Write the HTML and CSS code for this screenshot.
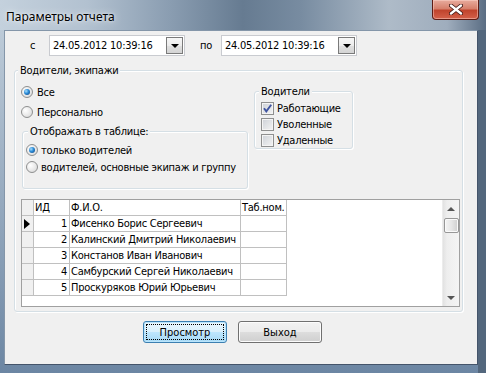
FILE: index.html
```html
<!DOCTYPE html>
<html lang="ru">
  <head>
    <meta charset="UTF-8" />
    <title>Параметры отчета</title>
    <link rel="stylesheet" href="styles.css">
  </head>
  <body>
    <div class="window">
      <div class="titlebar">
        <span class="title">Параметры отчета</span>
        <div class="close-btn">
          <svg width="14" height="11" viewBox="0 0 14 11">
            <path d="M2 1.5 L12 9.5 M12 1.5 L2 9.5" stroke="#3b1410" stroke-width="4" stroke-linecap="round" />
            <path d="M2 1.5 L12 9.5 M12 1.5 L2 9.5" stroke="#fff" stroke-width="2.4" stroke-linecap="round" />
          </svg>
        </div>
      </div>

      <div class="client">
        <div class="date-row">
          <span class="date-label">с</span>
          <div class="datepicker">
            <span>24.05.2012 10:39:16</span>
            <span class="dd-btn"><i class="arrow-down"></i></span>
          </div>
          <span class="date-label date-label-to">по</span>
          <div class="datepicker">
            <span>24.05.2012 10:39:16</span>
            <span class="dd-btn"><i class="arrow-down"></i></span>
          </div>
        </div>

        <div class="group group-main">
          <div class="group-title">Водители, экипажи</div>
          <div class="top-section">
            <div class="left-col">
              <label class="radio-row"><span class="radio checked"></span>Все</label>
              <label class="radio-row"><span class="radio"></span>Персонально</label>
              <div class="group group-show">
                <div class="group-title">Отображать в таблице:</div>
                <div class="radio-list">
                  <label class="radio-row"><span class="radio checked"></span>только водителей</label>
                  <label class="radio-row"><span class="radio"></span>водителей, основные экипаж и группу</label>
                </div>
              </div>
            </div>

            <div class="group group-drivers">
              <div class="group-title">Водители</div>
              <div class="check-list">
                <label class="check-row">
                  <span class="checkbox">
                    <svg width="11" height="11" viewBox="0 0 11 11">
                      <path d="M2 5.2 L4.3 8.3 L9.2 1.8" fill="none" stroke="#3f54a0" stroke-width="1.9" />
                    </svg>
                  </span>Работающие
                </label>
                <label class="check-row"><span class="checkbox"></span>Уволенные</label>
                <label class="check-row"><span class="checkbox"></span>Удаленные</label>
              </div>
            </div>
          </div>

          <div class="grid">
            <div class="grid-table">
              <div class="grid-row grid-head">
                <div class="cell ind"></div>
                <div class="cell">ИД</div>
                <div class="cell">Ф.И.О.</div>
                <div class="cell">Таб.ном.</div>
              </div>
              <div class="grid-row">
                <div class="cell ind"><i class="pointer"></i></div>
                <div class="cell num">1</div>
                <div class="cell">Фисенко Борис Сергеевич</div>
                <div class="cell"></div>
              </div>
              <div class="grid-row">
                <div class="cell ind"></div>
                <div class="cell num">2</div>
                <div class="cell">Калинский Дмитрий Николаевич</div>
                <div class="cell"></div>
              </div>
              <div class="grid-row">
                <div class="cell ind"></div>
                <div class="cell num">3</div>
                <div class="cell">Констанов Иван Иванович</div>
                <div class="cell"></div>
              </div>
              <div class="grid-row">
                <div class="cell ind"></div>
                <div class="cell num">4</div>
                <div class="cell">Самбурский Сергей Николаевич</div>
                <div class="cell"></div>
              </div>
              <div class="grid-row">
                <div class="cell ind"></div>
                <div class="cell num">5</div>
                <div class="cell">Проскуряков Юрий Юрьевич</div>
                <div class="cell"></div>
              </div>
            </div>
            <div class="scrollbar">
              <span class="sb-btn"><i class="sb-arrow-up"></i></span>
              <span class="sb-thumb"></span>
              <span class="sb-track"></span>
              <span class="sb-btn"><i class="sb-arrow-down"></i></span>
            </div>
          </div>
        </div>

        <div class="buttons">
          <button class="btn btn-default">Просмотр</button>
          <button class="btn">Выход</button>
        </div>
      </div>
    </div>
  </body>
</html>
```

FILE: styles.css
```css
* {
  box-sizing: border-box;
  margin: 0;
  padding: 0;
}

body {
  width: 486px;
  height: 373px;
  overflow: hidden;
  font-family: "DejaVu Sans Condensed", "Liberation Sans", sans-serif;
  font-size: 11px;
  letter-spacing: -0.25px;
  color: #000;
  background: #6d84a0;
}

.window {
  width: 486px;
  height: 373px;
  display: flex;
  flex-direction: column;
  background:
    linear-gradient(to right, transparent 478px, #53677d 478px),
    linear-gradient(#c3d0dc, #95a9be 55%, #6c86a3);
}

/* title bar */

.titlebar {
  height: 30px;
  display: flex;
  align-items: flex-start;
  background: linear-gradient(to right, #c4d1dd 0%, #b2c1d0 18%, #8a9db1 35%, #667b91 50%, #788ca1 62%, #aebbc8 80%, #9fadbd 92%, #5a6d83 100%);
}

.title {
  padding: 9px 0 0 6px;
  font-family: "Noto Sans", "Open Sans", sans-serif;
  font-size: 12px;
  letter-spacing: 0;
  line-height: 16px;
  text-shadow: 0 0 8px rgba(255, 255, 255, 0.9), 0 0 3px rgba(255, 255, 255, 0.8);
}

.close-btn {
  margin-left: auto;
  margin-right: 7px;
  width: 47px;
  height: 20px;
  border: 1px solid #5e1c14;
  border-top: none;
  border-radius: 0 0 4px 4px;
  background: linear-gradient(#e8ac9e, #d6806c 45%, #c0442d 55%, #d4614a);
  box-shadow: inset 0 0 0 1px rgba(255, 220, 210, 0.45);
  display: flex;
  align-items: center;
  justify-content: center;
}

/* client area */

.client {
  flex: 1;
  margin: 0 8px 8px 4px;
  background: #f0f0f0;
  border: 1px solid;
  border-color: #8496a9 #44546a #44546a #8496a9;
  padding-top: 4px;
}

.date-row {
  display: flex;
  align-items: center;
  height: 21px;
  padding-left: 25px;
}

.date-label {
  width: 19px;
}

.date-label-to {
  width: 21px;
  margin-left: 15px;
}

.datepicker {
  width: 136px;
  height: 21px;
  display: flex;
  align-items: center;
  padding-left: 3px;
  background: #fff;
  border: 1px solid #c9cbd0;
}

.dd-btn {
  margin-left: auto;
  margin-right: 1px;
  width: 17px;
  height: 17px;
  display: flex;
  align-items: center;
  justify-content: center;
  border: 1px solid #7a7a7a;
  background: linear-gradient(#f6f6f6, #ececec 50%, #e0e0e0 50%, #d4d4d4);
}

.arrow-down {
  border-left: 4px solid transparent;
  border-right: 4px solid transparent;
  border-top: 4px solid #000;
}

/* group boxes */

.group {
  border: 1px solid #d5dfe5;
  border-radius: 3px;
  box-shadow: inset 1px 1px 0 #fff, 1px 1px 0 #fff;
}

.group-title {
  width: max-content;
  height: 13px;
  line-height: 13px;
  margin-top: -7px;
  padding: 0 2px;
  background: #f0f0f0;
}

.group-main {
  width: 449px;
  margin: 14px 0 0 9px;
  padding-bottom: 4px;
}

.group-main > .group-title {
  margin-left: 3px;
}

.top-section {
  display: flex;
  align-items: flex-start;
  padding-left: 6px;
}

.left-col {
  width: 227px;
  padding-top: 7px;
}

.radio-row {
  display: flex;
  align-items: center;
  gap: 4px;
  height: 16px;
  white-space: nowrap;
}

.left-col > .radio-row + .radio-row {
  margin-top: 4px;
}

.radio {
  flex: none;
  width: 12px;
  height: 12px;
  border-radius: 50%;
  border: 1px solid #8e8f8f;
  background: radial-gradient(circle at 35% 35%, #ffffff, #e6e6e6 60%, #d0d0d0);
  display: flex;
  align-items: center;
  justify-content: center;
}

.radio.checked::after {
  content: "";
  width: 6px;
  height: 6px;
  border-radius: 50%;
  background: radial-gradient(circle at 35% 35%, #a8e0ff 0, #2a8ad6 45%, #123f75 100%);
}

.group-show {
  width: 226px;
  margin: 11px 0 0 1px;
  padding: 0 0 13px 3px;
}

.group-show > .group-title {
  margin-left: 2px;
}

.radio-list {
  margin-top: 4px;
  display: flex;
  flex-direction: column;
  gap: 1px;
}

.group-show .radio-row {
  gap: 3px;
}

.group-drivers {
  width: 99px;
  margin: 14px 0 0 6px;
  padding-left: 6px;
}

.group-drivers > .group-title {
  margin-left: -2px;
}

.check-list {
  margin-top: 2px;
}

.check-row {
  display: flex;
  align-items: center;
  gap: 3px;
  height: 16px;
}

.checkbox {
  flex: none;
  width: 13px;
  height: 13px;
  border: 1px solid #8e8f8f;
  background: linear-gradient(135deg, #cdd1d7, #f4f4f4);
  box-shadow: inset 0 0 0 1px #f4f4f4;
  display: flex;
  align-items: center;
  justify-content: center;
}

/* data grid */

.grid {
  width: 439px;
  height: 108px;
  margin: 10px 0 0 6px;
  display: flex;
  border: 1px solid #a0a0a0;
  background: #fff;
}

.grid-table {
  flex: 1;
}

.grid-row {
  display: grid;
  grid-template-columns: 12px 36px 171px 46px;
  height: 16px;
}

.cell {
  border-right: 1px solid #c0c0c0;
  border-bottom: 1px solid #c0c0c0;
  padding-left: 1px;
  line-height: 15px;
  white-space: nowrap;
  overflow: hidden;
}

.cell.ind {
  padding-left: 2px;
  background: #f0f0f0;
  display: flex;
  align-items: center;
}

.cell.num {
  text-align: right;
  padding-right: 2px;
}

.pointer {
  border-left: 6px solid #000;
  border-top: 5px solid transparent;
  border-bottom: 5px solid transparent;
}

.scrollbar {
  width: 17px;
  display: flex;
  flex-direction: column;
  align-items: center;
  background: linear-gradient(to right, #e2e2e2, #eeeeee 25%, #f4f4f4);
  border-left: 1px solid #ececec;
}

.sb-btn {
  height: 17px;
  width: 100%;
  display: flex;
  align-items: center;
  justify-content: center;
}

.sb-arrow-up {
  border-left: 4px solid transparent;
  border-right: 4px solid transparent;
  border-bottom: 4px solid #555;
}

.sb-arrow-down {
  border-left: 4px solid transparent;
  border-right: 4px solid transparent;
  border-top: 4px solid #555;
}

.sb-thumb {
  width: 15px;
  height: 15px;
  margin-top: 1px;
  border: 1px solid #979797;
  border-radius: 2px;
  background: linear-gradient(to right, #f4f4f4, #e6e6e6 50%, #cfcfcf);
  box-shadow: inset 0 0 0 1px #fafafa;
}

.sb-track {
  flex: 1;
}

/* buttons */

.buttons {
  display: flex;
  gap: 11px;
  margin: 9px 0 0 138px;
}

.btn {
  width: 84px;
  height: 22px;
  font: inherit;
  color: #000;
  border: 1px solid #707070;
  border-radius: 3px;
  background: linear-gradient(#f2f2f2, #ebebeb 50%, #dddddd 50%, #cfcfcf);
  box-shadow: inset 0 0 0 1px #fcfcfc;
}

.btn-default {
  border-color: #3c7fb1;
  background: linear-gradient(#eaf6fd, #d9f0fc 50%, #bee6fd 50%, #a7d9f5);
  box-shadow: inset 0 0 0 1px #b9e4fb;
  outline: 1px dotted #000;
  outline-offset: -4px;
}
```
